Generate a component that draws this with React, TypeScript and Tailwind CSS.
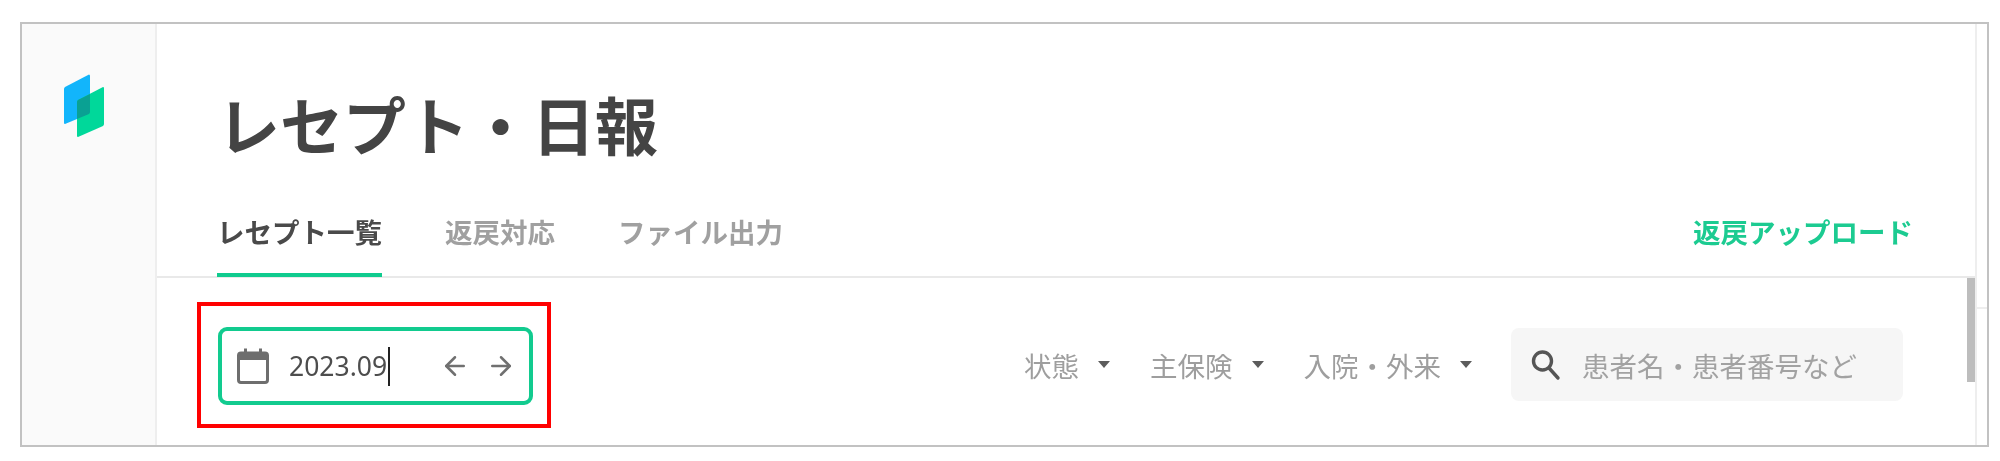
import { ArrowLeft, ArrowRight, Search } from "lucide-react";

const jp = "font-['Noto_Sans_CJK_JP','Noto_Sans',sans-serif]";

function Logo() {
  return (
    <svg width="40" height="63" viewBox="0 0 40 63" className="block">
      <path d="M1 13 L25 0.5 Q26 0.5 26 2 L26 38 Q26 39 25 40 L1 50 Q0 50 0 49 L0 15 Q0 14 1 13 Z" fill="#12b5fb" />
      <path d="M14 26 L39 13 Q40 13 40 14 L40 50 Q40 51 39 52 L14 63 Q13 63 13 62 L13 28 Q13 27 14 26 Z" fill="#00d89a" />
      <path d="M14 26 L26 20 L26 38 Q26 39 25 40 L13 45 L13 28 Q13 27 14 26 Z" fill="#0aa193" />
    </svg>
  );
}

function CalendarIcon() {
  return (
    <svg width="32" height="36" viewBox="0 0 32 36" className="block shrink-0">
      <rect x="1.5" y="5" width="29" height="29.5" rx="2.5" fill="none" stroke="#6e6e6e" strokeWidth="3" />
      <rect x="1.5" y="5" width="29" height="7" fill="#6e6e6e" />
      <rect x="7" y="0.5" width="3" height="6" fill="#6e6e6e" />
      <rect x="22" y="0.5" width="3" height="6" fill="#6e6e6e" />
    </svg>
  );
}

function SearchIcon() {
  return (
    <svg width="32" height="32" viewBox="0 0 32 32" className="block shrink-0" fill="none" stroke="#555555" strokeWidth="3.4" strokeLinecap="round">
      <circle cx="12.5" cy="12" r="9" />
      <path d="M19 19 L28 29" />
    </svg>
  );
}

function Filter({ label }: { label: string }) {
  return (
    <div className="flex items-center gap-[19px]">
      <span className="text-[27.5px] leading-[40px] text-[#9e9e9e]">{label}</span>
      <span className="w-0 h-0 border-x-[6px] border-x-transparent border-t-[7px] border-t-[#5c5c5c]" />
    </div>
  );
}

export default function App() {
  return (
    <div className={`h-[461px] bg-white pt-[22px] pl-[20px] blur-[0.6px] ${jp}`}>
      <div className="flex w-[1969px] h-[425px] border-2 border-[#c2c2c2]">
        <aside className="w-[135px] shrink-0 bg-[#fafafa] border-r-2 border-[#eeeeee] pt-[50px] pl-[42px]">
          <Logo />
        </aside>

        <main className="flex-1 flex flex-col min-w-0">
          <header className="h-[254px] shrink-0 border-b-2 border-[#e9e9e9] flex flex-col">
            <h1 className="mt-[59px] h-[80px] pl-[60px] text-[63px] leading-[80px] font-bold text-[#444444]">
              レセプト・日報
            </h1>
            <div className="mt-[48px] flex items-start justify-between pl-[60px] pr-[62px]">
              <div className="flex gap-[63px] text-[27.5px] leading-[40px] font-bold">
                <div className="pb-[20px] border-b-4 border-[#0fcb8e] text-[#4a4a4a] h-[66px]">
                  レセプト一覧
                </div>
                <div className="text-[#a0a0a0]">返戻対応</div>
                <div className="text-[#a0a0a0]">ファイル出力</div>
              </div>
              <div className="text-[27.5px] leading-[40px] font-bold text-[#1ccb91]">返戻アップロード</div>
            </div>
          </header>

          <div className="flex flex-1 min-h-0">
            <div className="flex-1 flex items-start justify-between pl-[61px] pr-[64px] pt-[49px]">
              <div className="relative flex items-center w-[315px] h-[78px] border-4 border-[#12cb8f] rounded-[9px] pl-[15px] pr-[13px]">
                <CalendarIcon />
                <span className="ml-[20px] font-['Noto_Sans',sans-serif] text-[26.5px] leading-[40px] text-[#4d4d4d]">2023.09</span>
                <span className="ml-[1px] w-[2px] h-[39px] bg-[#222222]" />
                <ArrowLeft className="ml-auto text-[#707070]" size={30} strokeWidth={2} />
                <ArrowRight className="ml-[16px] text-[#707070]" size={30} strokeWidth={2} />
                <div className="absolute left-[-25px] top-[-29px] w-[354px] h-[126px] border-4 border-[#ff0000]" />
              </div>

              <div className="flex items-center gap-[39px] mt-[1px]">
                <div className="flex items-center gap-[40px]">
                  <Filter label="状態" />
                  <Filter label="主保険" />
                  <Filter label="入院・外来" />
                </div>
                <div className="flex items-center w-[392px] h-[73px] rounded-[8px] bg-[#f6f6f6] pl-[19px]">
                  <SearchIcon />
                  <span className="ml-[20px] text-[27.5px] leading-[40px] text-[#a2a2a2]">患者名・患者番号など</span>
                </div>
              </div>
            </div>
            <div className="w-[8px] h-[104px] shrink-0 bg-[#bdbdbd]" />
          </div>
        </main>

        <div className="w-[12px] shrink-0 border-l-2 border-[#eeeeee]">
          <div className="h-[285px] border-b-2 border-[#eeeeee]" />
        </div>
      </div>
    </div>
  );
}
